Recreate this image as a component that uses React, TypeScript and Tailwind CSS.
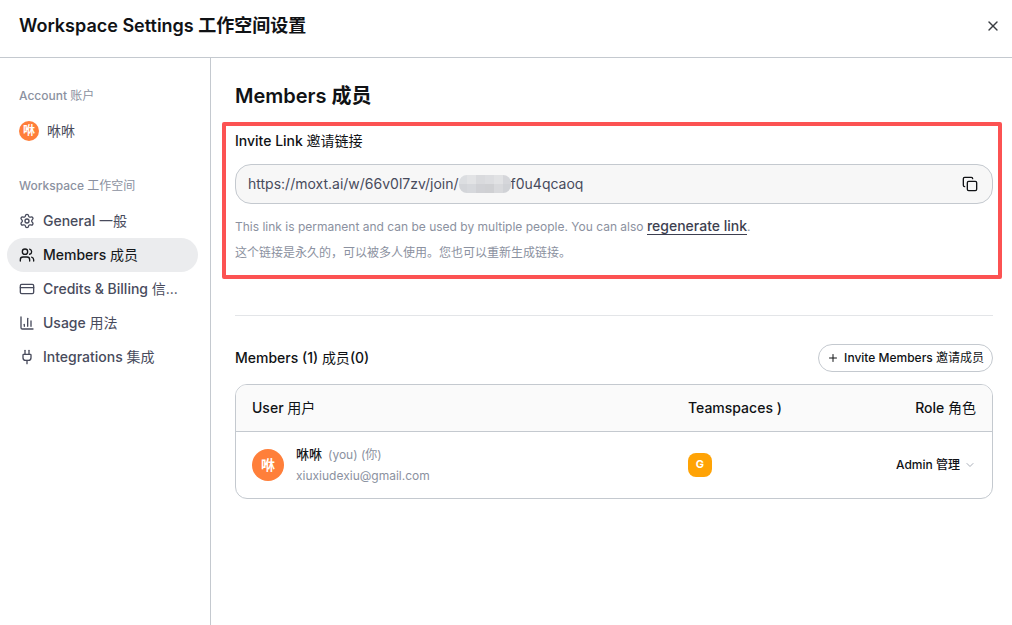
import type { ReactNode } from "react";
import { ChartColumn, ChevronDown, Copy, CreditCard, Plug, Plus, Settings, Users, X } from "lucide-react";

// lighter weight for the Chinese half of a label
function Zh({ children }: { children: ReactNode }) {
  return <span className="font-normal">{children}</span>;
}

const navItems = [
  { icon: Settings, label: "General", zh: "一般" },
  { icon: Users, label: "Members", zh: "成员", active: true },
  { icon: CreditCard, label: "Credits & Billing", zh: "信..." },
  { icon: ChartColumn, label: "Usage", zh: "用法" },
  { icon: Plug, label: "Integrations", zh: "集成" },
];

const mosaic = [
  ["#dcdee1", "#e2e3e5", "#d9dadd", "#dcdde0", "#e1e2e4", "#d5d6da"],
  ["#d3d5d9", "#d6d8dc", "#d0d1d5", "#cfd0d3", "#d8d9dc", "#d0d2d6"],
];

// pixelated patch that hides part of the invite token
function Mosaic() {
  return (
    <svg
      width="52"
      height="18"
      viewBox="0 0 52 18"
      className="pointer-events-none absolute top-[10px] left-[223px]"
      aria-hidden="true"
    >
      <clipPath id="pill">
        <rect width="52" height="18" rx="8" />
      </clipPath>
      <g clipPath="url(#pill)" shapeRendering="crispEdges">
        {mosaic.map((row, y) =>
          row.map((fill, x) => (
            <rect key={`${x}-${y}`} x={x * 9 - 1} y={y * 9} width="9" height="9" fill={fill} />
          ))
        )}
      </g>
    </svg>
  );
}

function Sidebar() {
  const getLinkClasses = (active?: boolean) =>
    `flex h-[34px] items-center gap-2 rounded-full px-3 text-sm font-medium ${
      active ? "bg-[#ebecee] text-[#16181b]" : "text-[#484b5c]"
    }`;

  return (
    <aside className="w-[211px] shrink-0 border-r border-[#c4c9cf] pt-[30px] pr-3 pl-[7px]">
      <h2 className="mb-[10px] pl-3 text-xs font-medium text-[#8b91a0]">
        Account <Zh>账户</Zh>
      </h2>
      <a href="#account" className={getLinkClasses()}>
        <span className="flex size-5 shrink-0 items-center justify-center rounded-full bg-[#ff7f3a] text-xs font-bold text-white">
          咻
        </span>
        <Zh>咻咻</Zh>
      </a>

      <h2 className="mt-[30px] mb-[10px] pl-3 text-xs font-medium text-[#8b91a0]">
        Workspace <Zh>工作空间</Zh>
      </h2>
      <nav>
        {navItems.map(({ icon: Icon, label, zh, active }) => (
          <a key={label} href={`#${label}`} className={getLinkClasses(active)}>
            <Icon size={16} className="shrink-0" />
            <span className="whitespace-nowrap">
              {label} <Zh>{zh}</Zh>
            </span>
          </a>
        ))}
      </nav>
    </aside>
  );
}

function InviteLink() {
  return (
    <section className="relative mt-[21px]">
      <label htmlFor="invite-link" className="block text-sm font-medium">
        Invite Link <Zh>邀请链接</Zh>
      </label>
      <div className="relative mt-[13px] flex h-10 items-center rounded-2xl border border-[#c4c9cf] bg-[#f7f7f7] pr-[14px] pl-3">
        <input
          id="invite-link"
          readOnly
          value={"https://moxt.ai/w/66v0l7zv/join/" + "\u00a0".repeat(11) + "6f0u4qcaoq"}
          className="min-w-0 flex-1 bg-transparent text-sm text-[#484b5c] outline-none"
        />
        <Mosaic />
        <button aria-label="Copy link">
          <Copy size={16} />
        </button>
      </div>
      <div className="mt-[10px] text-xs leading-[26px] text-[#8b91a0]">
        <p>
          This link is permanent and can be used by multiple people. You can also{" "}
          <a
            href="#regenerate"
            className="border-b border-[#3d3f50] text-sm leading-4 font-medium text-[#3d3f50]"
          >
            regenerate link
          </a>
          .
        </p>
        <p>这个链接是永久的，可以被多人使用。您也可以重新生成链接。</p>
      </div>
      <div className="pointer-events-none absolute -top-[9px] -right-[9px] -bottom-[13px] -left-[13px] rounded-xs border-4 border-[#fc5252]" />
    </section>
  );
}

function MembersTable() {
  return (
    <div className="mt-3 overflow-hidden rounded-xl border border-[#c4c9cf]">
      <table className="w-full table-fixed text-sm">
        <thead>
          <tr className="h-[46px] border-b border-[#c4c9cf] bg-[#fafafa]">
            <th className="px-4 text-left font-medium">
              User <Zh>用户</Zh>
            </th>
            <th className="w-40 px-4 text-left font-medium">Teamspaces )</th>
            <th className="w-40 px-4 text-right font-medium">
              Role <Zh>角色</Zh>
            </th>
          </tr>
        </thead>
        <tbody>
          <tr className="h-[67px]">
            <td className="px-4">
              <div className="flex items-center gap-3">
                <span className="flex size-8 shrink-0 items-center justify-center rounded-full bg-[#ff7f3a] text-sm font-bold text-white">
                  咻
                </span>
                <div className="text-xs text-[#8b91a0]">
                  <p className="leading-[22px]">
                    <span className="mr-[6px] text-[13px] font-medium text-[#16181b]">咻咻</span>
                    (you) (你)
                  </p>
                  <p className="leading-5">xiuxiudexiu@gmail.com</p>
                </div>
              </div>
            </td>
            <td className="px-4">
              <span className="flex size-6 items-center justify-center rounded-lg bg-[#ffa305] text-[11px] font-bold text-white">
                G
              </span>
            </td>
            <td className="px-4">
              <div className="relative flex items-center justify-end">
                <select
                  aria-label="Role"
                  className="appearance-none bg-transparent pr-4 text-xs font-medium outline-none"
                >
                  <option>Admin 管理</option>
                </select>
                <ChevronDown
                  size={12}
                  className="pointer-events-none absolute right-0 text-[#a9aeb8]"
                />
              </div>
            </td>
          </tr>
        </tbody>
      </table>
    </div>
  );
}

export default function App() {
  return (
    <div className="flex min-h-screen flex-col bg-white font-['Inter','Noto_Sans_CJK_SC',sans-serif] text-[#101215]">
      <header className="flex h-[58px] items-center justify-between border-b border-[#c4c9cf] pr-[11px] pb-[6px] pl-[19px]">
        <h1 className="text-lg font-semibold">Workspace Settings 工作空间设置</h1>
        <button aria-label="Close" className="text-[#3a3d42]">
          <X size={16} />
        </button>
      </header>

      <div className="flex flex-1">
        <Sidebar />
        <main className="min-w-0 flex-1 pt-6 pr-[19px] pl-6">
          <h2 className="text-xl leading-7 font-semibold">Members 成员</h2>
          <InviteLink />
          <hr className="mt-[49px] border-[#e3e5e8]" />
          <div className="mt-7 flex items-center justify-between">
            <h3 className="text-sm font-medium">
              Members (1) <Zh>成员</Zh>(0)
            </h3>
            <button className="flex h-7 items-center gap-[5px] rounded-full border border-[#c4c9cf] px-2 text-xs font-medium">
              <Plus size={12} />
              <span>
                Invite Members <Zh>邀请成员</Zh>
              </span>
            </button>
          </div>
          <MembersTable />
        </main>
      </div>
    </div>
  );
}
